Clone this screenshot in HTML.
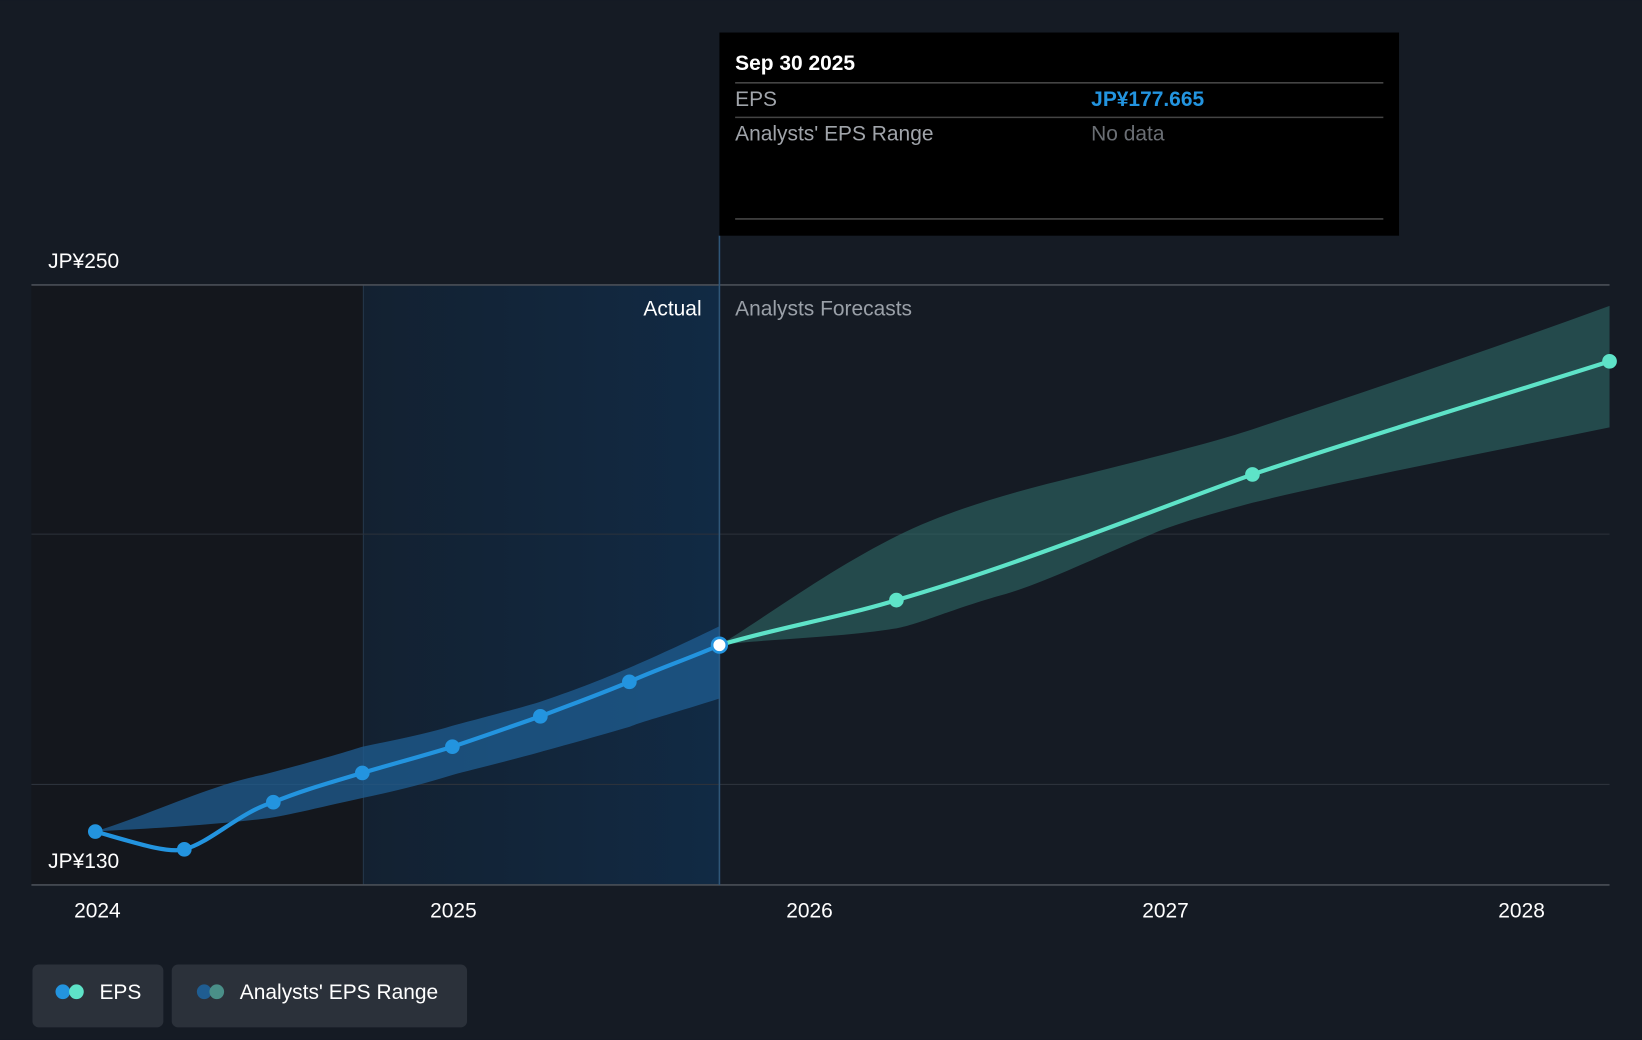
<!DOCTYPE html>
<html><head><meta charset="utf-8"><style>
html,body{margin:0;padding:0;background:#151b24;}
svg{display:block;font-family:"Liberation Sans",Roboto,sans-serif;}
</style></head><body>
<svg width="1642" height="1040" viewBox="0 0 1568 993" xmlns="http://www.w3.org/2000/svg">
<defs>
<linearGradient id="ag" x1="0" x2="1" y1="0" y2="0">
<stop offset="0" stop-color="#132131"/><stop offset="1" stop-color="#112a44"/></linearGradient>
</defs>
<rect width="1568" height="993" fill="#151b24"/>
<rect x="30" y="272" width="317" height="573" fill="#14171d"/>
<rect x="347" y="272" width="340" height="573" fill="url(#ag)"/>
<line x1="347" y1="272" x2="347" y2="845" stroke="#24364a" stroke-width="1"/>
<line x1="30" y1="272" x2="1537" y2="272" stroke="#4a4f57" stroke-width="1.5"/>
<line x1="30" y1="510" x2="1537" y2="510" stroke="#2c323b" stroke-width="1"/>
<line x1="30" y1="749" x2="1537" y2="749" stroke="#2c323b" stroke-width="1"/>
<line x1="30" y1="845" x2="1537" y2="845" stroke="#4a4f57" stroke-width="1.5"/>
<line x1="687" y1="225" x2="687" y2="845" stroke="#2f5678" stroke-width="1.5"/>
<path d="M91,794 C150,775 200,750 250,740 C300,727 330,718 346,713 C380,706 410,700 432,693 C470,683 500,675 516,670 C560,655 600,640 687,598 L687,667 C640,682 610,690 601,694 C560,706 530,714 516,718 C480,728 450,735 432,740 C400,750 370,757 346,762 C300,772 270,780 250,782 C180,790 120,792 91,794 Z" fill="#1f5d91" fill-opacity="0.75"/>
<path d="M687,616 C730,590 790,545 856,512 C900,490 950,475 1000,462 C1080,442 1150,425 1196,410 C1300,375 1420,335 1537,292 L1537,408 C1420,432 1300,455 1196,480 C1140,495 1110,505 1100,510 C1040,535 990,560 950,570 C900,585 880,595 856,600 C790,610 730,610 687,616 Z" fill="#2e6b68" fill-opacity="0.6"/>
<path d="M91,794 C130,805 160,815 176,811 C200,805 230,775 261,766 C290,754 320,746 346,738 C380,728 410,720 432,713 C465,702 490,693 516,684 C550,671 575,662 601,651 C630,638 660,628 687,616" fill="none" stroke="#2394df" stroke-width="4"/>
<path d="M687,616 C740,600 800,590 856,573 C970,540 1080,495 1196,453 C1310,415 1420,382 1537,345" fill="none" stroke="#5ee3c8" stroke-width="4"/>
<g fill="#2394df"><circle cx="91" cy="794" r="7"/><circle cx="176" cy="811" r="7"/><circle cx="261" cy="766" r="7"/><circle cx="346" cy="738" r="7"/><circle cx="432" cy="713" r="7"/><circle cx="516" cy="684" r="7"/><circle cx="601" cy="651" r="7"/></g>
<g fill="#5ee3c8"><circle cx="856" cy="573" r="7"/><circle cx="1196" cy="453" r="7"/><circle cx="1537" cy="345" r="7"/></g>
<circle cx="687" cy="616" r="7" fill="#fff" stroke="#2394df" stroke-width="2.5"/>
<text x="46" y="256" fill="#fff" font-size="20">JP¥250</text>
<text x="46" y="829" fill="#fff" font-size="20">JP¥130</text>
<text x="670" y="301" fill="#fff" font-size="20" text-anchor="end">Actual</text>
<text x="702" y="301" fill="#9aa0a8" font-size="20">Analysts Forecasts</text>
<g fill="#fff" font-size="20" text-anchor="middle"><text x="93" y="876">2024</text><text x="433" y="876">2025</text><text x="773" y="876">2026</text><text x="1113" y="876">2027</text><text x="1453" y="876">2028</text></g>
<rect x="687" y="31" width="649" height="194" fill="#000"/>
<text x="702" y="67" fill="#fff" font-size="20" font-weight="bold">Sep 30 2025</text>
<line x1="702" y1="79" x2="1321" y2="79" stroke="#444" stroke-width="1.5"/>
<text x="702" y="101" fill="#a0a4aa" font-size="20">EPS</text>
<text x="1042" y="101" fill="#2394df" font-size="20" font-weight="bold">JP¥177.665</text>
<line x1="702" y1="112" x2="1321" y2="112" stroke="#444" stroke-width="1.5"/>
<text x="702" y="134" fill="#a0a4aa" font-size="20">Analysts' EPS Range</text>
<text x="1042" y="134" fill="#6a6e74" font-size="20">No data</text>
<line x1="702" y1="209" x2="1321" y2="209" stroke="#444" stroke-width="1.5"/>
<rect x="31" y="921" width="125" height="60" rx="6" fill="#2b313a"/>
<circle cx="60" cy="947" r="7" fill="#2394df"/><circle cx="73" cy="947" r="7" fill="#5ee3c8"/>
<text x="95" y="954" fill="#fff" font-size="20">EPS</text>
<rect x="164" y="921" width="282" height="60" rx="6" fill="#2b313a"/>
<circle cx="195" cy="947" r="7" fill="#1f5d91"/><circle cx="207" cy="947" r="7" fill="#4a8f88"/>
<text x="229" y="954" fill="#fff" font-size="20">Analysts' EPS Range</text>
</svg>
</body></html>
